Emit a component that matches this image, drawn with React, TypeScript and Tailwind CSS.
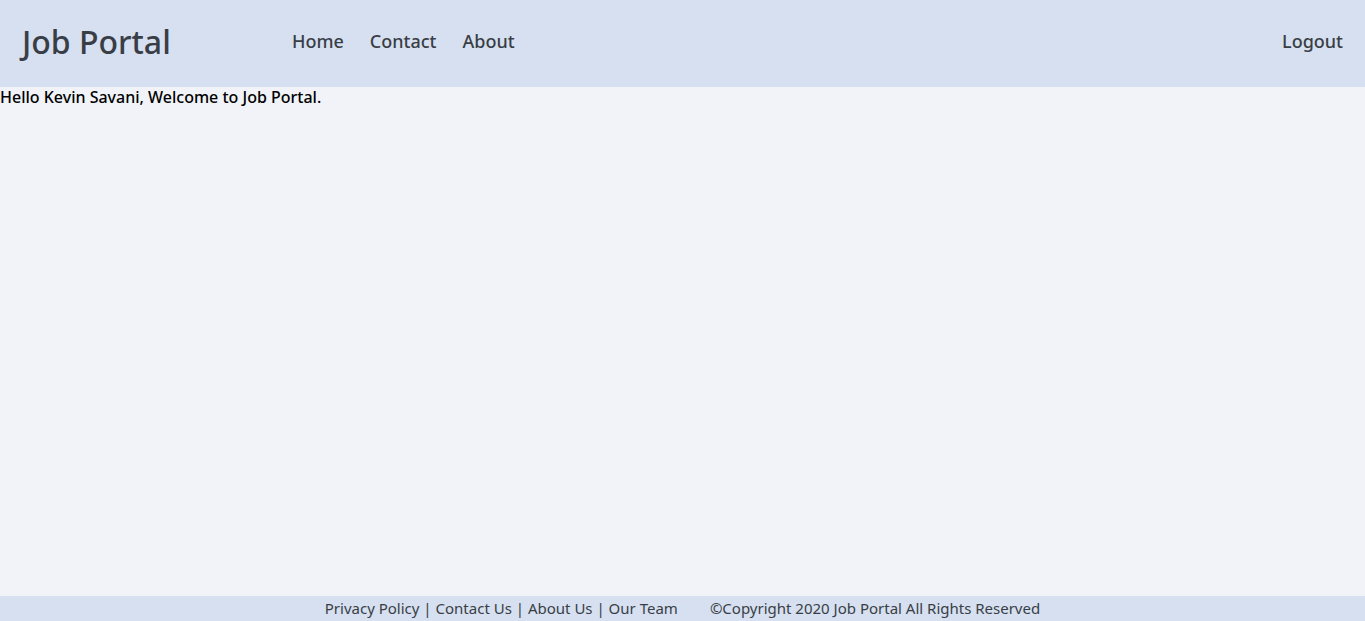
export default function App() {
  const font = { fontFamily: '"Noto Sans", "Open Sans", sans-serif' };
  return (
    <div className="min-h-screen flex flex-col bg-[#f1f3f8]" style={font}>
      <header className="h-[87px] bg-[#d6e0f0] flex items-center px-[22px] pb-[4px] text-[#393e46]">
        <h1 className="text-[32px] font-medium w-[270px] leading-none">Job Portal</h1>
        <nav className="flex items-center gap-[26px] text-[18px] font-medium">
          <a>Home</a>
          <a>Contact</a>
          <a>About</a>
        </nav>
        <a className="ml-auto text-[18px] font-medium">Logout</a>
      </header>

      <main className="flex-1">
        <p className="text-[16px] font-medium text-black leading-[21px]">Hello Kevin Savani, Welcome to Job Portal.</p>
      </main>

      <footer className="h-[25px] bg-[#d6e0f0] flex items-center justify-center text-[15px] text-[#393e46]">
        <span>Privacy Policy | Contact Us | About Us | Our Team</span>
        <span className="ml-[32px]">©Copyright 2020 Job Portal All Rights Reserved</span>
      </footer>
    </div>
  );
}
